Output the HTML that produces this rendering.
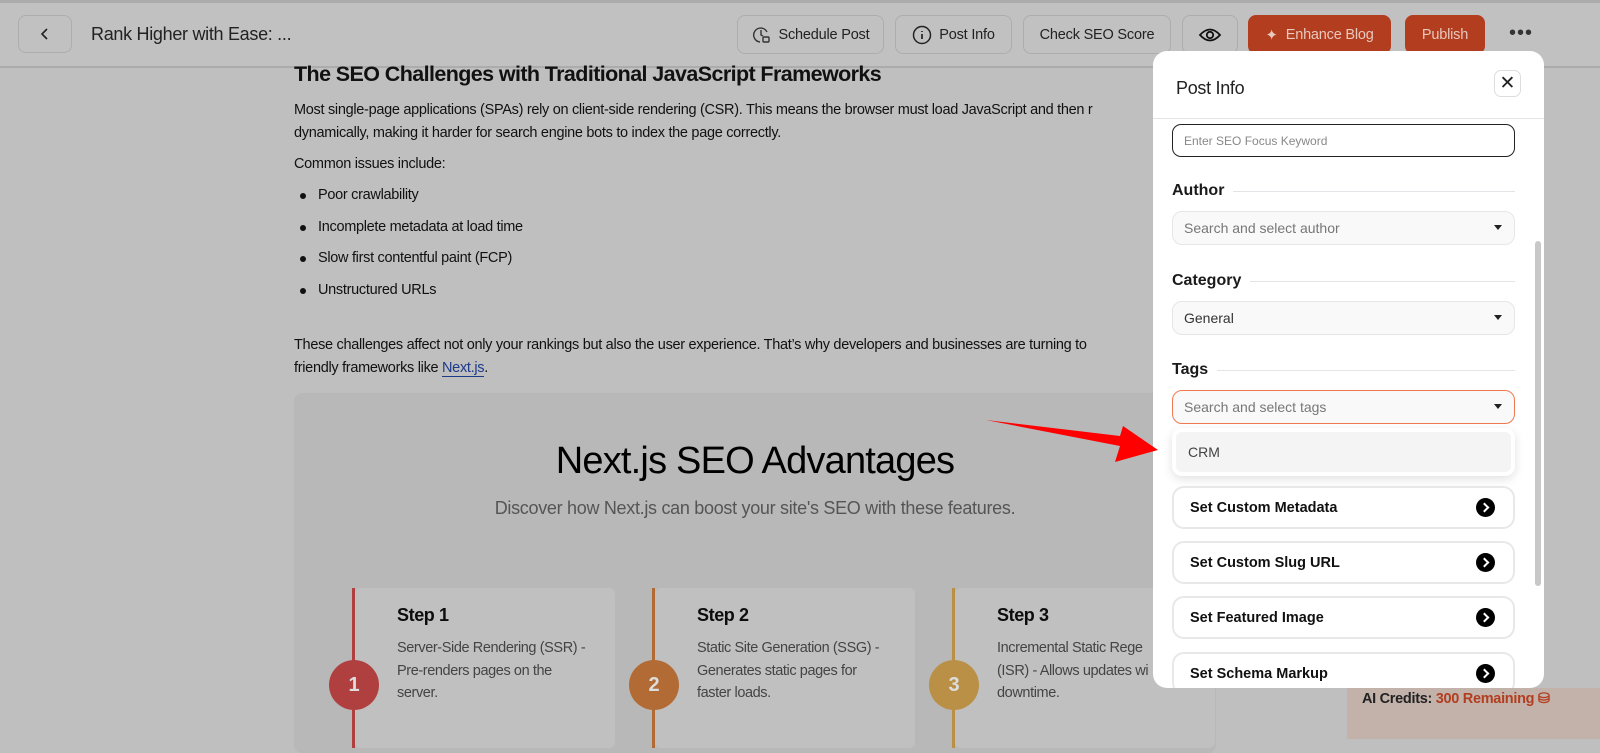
<!DOCTYPE html>
<html><head><meta charset="utf-8"><style>
*{box-sizing:border-box;margin:0;padding:0}
body{width:1600px;height:739px;overflow:hidden;background:#bfbfbf;font-family:"Liberation Sans",sans-serif;color:#0d0d0d;position:relative}
.hdr{position:absolute;left:0;top:0;width:1600px;height:68px;background:#c1c1c1;border-top:3px solid #acacac;border-bottom:2px solid #acacac}
.btn{position:absolute;top:15px;height:39px;border:1px solid #adadad;border-radius:8px;font-size:14.5px;display:flex;align-items:center;justify-content:center;color:#222;letter-spacing:-0.2px}
.or{background:#b23d1f;border-color:#b23d1f;color:#e8c8bf}
.c{position:absolute;font-size:14.5px;letter-spacing:-0.3px;color:#111}
ul.c{list-style:none}
ul.c li{height:31.5px;line-height:31.5px;position:relative;padding-left:24px}
ul.c li:before{content:"";position:absolute;left:6px;top:13px;width:6px;height:6px;border-radius:50%;background:#111}
.box{position:absolute;left:294px;top:393px;width:922px;height:360px;background:#b8b8b8;border-radius:8px}
.card{position:absolute;top:588px;width:260px;height:160px;background:#c0c0c0;border-radius:6px}
.line{position:absolute;top:588px;width:3px;height:160px}
.num{position:absolute;top:660px;width:50px;height:50px;border-radius:50%;color:#ddd;font-size:20px;font-weight:bold;display:flex;align-items:center;justify-content:center}
.st{position:absolute;top:605px;font-size:18px;font-weight:bold;letter-spacing:-0.4px}
.sd{position:absolute;top:637px;font-size:14.5px;line-height:22.5px;color:#444;letter-spacing:-0.4px;width:196px}
.modal{position:absolute;left:1153px;top:51px;width:391px;height:637px;background:#fff;border-radius:14px;overflow:hidden}
.lbl{position:absolute;left:19px;font-size:16px;font-weight:bold;color:#1a1a1a;display:flex;align-items:center;width:343px}
.lbl:after{content:"";flex:1;height:1px;background:#e4e4e8;margin-left:9px}
.sel{position:absolute;left:19px;width:343px;height:34px;border:1px solid #e6e6e6;background:#f9f9f9;border-radius:10px;font-size:14px;color:#777;padding-left:11px;display:flex;align-items:center}
.sel:after{content:"";position:absolute;right:12px;top:13px;border:4px solid transparent;border-top:5px solid #222}
.opt{position:absolute;left:19px;width:343px;height:43px;border:2px solid #e8e8e8;border-radius:12px;font-size:14.5px;font-weight:bold;padding-left:16px;display:flex;align-items:center;color:#111}
.opt i{position:absolute;right:18px;top:10px;width:19px;height:19px;border-radius:50%;background:#000}
.opt i:after{content:"";position:absolute;left:5px;top:6px;width:5px;height:5px;border-right:2px solid #fff;border-top:2px solid #fff;transform:rotate(45deg)}
</style></head><body>
<div class="hdr"></div>
<div class="btn" style="left:18px;width:54px;height:38px;top:15px"><svg width="14" height="14" viewBox="0 0 14 14"><path d="M9 2 4 7l5 5" fill="none" stroke="#222" stroke-width="1.6"/></svg></div>
<div class="c" style="left:91px;top:24px;font-size:18px;color:#222">Rank Higher with Ease: ...</div>
<div class="btn" style="left:737px;width:147px"><svg width="20" height="20" viewBox="0 0 20 20" style="margin-right:7px"><path d="M15 7A7 7 0 1 0 8 17" fill="none" stroke="#333" stroke-width="1.4"/><path d="M9 5v5l2 1" fill="none" stroke="#333" stroke-width="1.4"/><rect x="11" y="12" width="6" height="5" rx="1" fill="none" stroke="#333" stroke-width="1.4"/></svg>Schedule Post</div>
<div class="btn" style="left:895px;width:117px"><svg width="20" height="20" viewBox="0 0 20 20" style="margin-right:7px"><circle cx="10" cy="10" r="8.5" fill="none" stroke="#222" stroke-width="1.5"/><path d="M10 9v5M10 6v1" stroke="#222" stroke-width="1.7"/></svg>Post Info</div>
<div class="btn" style="left:1023px;width:148px">Check SEO Score</div>
<div class="btn" style="left:1182px;width:56px"><svg width="24" height="20" viewBox="0 0 24 20"><path d="M2 10Q12-1 22 10Q12 21 2 10Z" fill="none" stroke="#111" stroke-width="1.8"/><circle cx="12" cy="10" r="3.2" fill="none" stroke="#111" stroke-width="1.8"/></svg></div>
<div class="btn or" style="left:1248px;width:143px"><span style="margin-right:8px;font-size:15px">✦</span>Enhance Blog</div>
<div class="btn or" style="left:1405px;width:80px">Publish</div>
<div style="position:absolute;left:1509px;top:22px;font-size:20px;letter-spacing:1px;color:#333">•••</div>

<div class="c" style="left:294px;top:62px;font-size:21.5px;font-weight:bold;letter-spacing:-0.6px">The SEO Challenges with Traditional JavaScript Frameworks</div>
<div class="c" style="left:294px;top:99px;line-height:23px;width:900px;white-space:nowrap">Most single-page applications (SPAs) rely on client-side rendering (CSR). This means the browser must load JavaScript and then r<br>dynamically, making it harder for search engine bots to index the page correctly.</div>
<div class="c" style="left:294px;top:153px;line-height:23px">Common issues include:</div>
<ul class="c" style="left:294px;top:180px"><li>Poor crawlability</li><li>Incomplete metadata at load time</li><li>Slow first contentful paint (FCP)</li><li>Unstructured URLs</li></ul>
<div class="c" style="left:294px;top:334px;line-height:23px;width:900px;white-space:nowrap">These challenges affect not only your rankings but also the user experience. That’s why developers and businesses are turning to<br>friendly frameworks like <span style="color:#1e3a8a;border-bottom:1.5px solid #1e3a8a">Next.js</span>.</div>
<div class="box"></div>
<div class="c" style="left:294px;width:922px;text-align:center;top:440px;font-size:38px;letter-spacing:-0.8px;color:#000">Next.js SEO Advantages</div>
<div class="c" style="left:294px;width:922px;text-align:center;top:498px;font-size:18px;color:#555">Discover how Next.js can boost your site's SEO with these features.</div>
<div class="card" style="left:355px"></div><div class="card" style="left:655px"></div><div class="card" style="left:955px"></div>
<div class="line" style="left:352px;background:#b04040"></div><div class="line" style="left:652px;background:#b36b35"></div><div class="line" style="left:952px;background:#b99045"></div>
<div class="num" style="left:329px;background:#b04040">1</div><div class="num" style="left:629px;background:#b36b35">2</div><div class="num" style="left:929px;background:#b99045">3</div>
<div class="st" style="left:397px">Step 1</div><div class="st" style="left:697px">Step 2</div><div class="st" style="left:997px">Step 3</div>
<div class="sd" style="left:397px">Server-Side Rendering (SSR) - Pre-renders pages on the server.</div>
<div class="sd" style="left:697px">Static Site Generation (SSG) - Generates static pages for faster loads.</div>
<div class="sd" style="left:997px;white-space:nowrap">Incremental Static Rege<br>(ISR) - Allows updates wi<br>downtime.</div>

<div style="position:absolute;left:1347px;top:688px;width:253px;height:51px;background:#c3b2aa"></div>
<div class="c" style="left:1362px;top:691px;font-size:14.5px;font-weight:bold;color:#222">AI Credits: <span style="color:#b23d1f">300 Remaining ⛁</span></div>

<div class="modal">
<div style="position:absolute;left:23px;top:27px;font-size:18px;color:#222;letter-spacing:-0.3px">Post Info</div>
<div style="position:absolute;left:341px;top:19px;width:27px;height:27px;border:1px solid #ddd;border-radius:7px;font-size:19px;text-align:center;line-height:25px;color:#222">✕</div>
<div style="position:absolute;left:0;top:67px;width:391px;height:1px;background:#e4e4e4"></div>
<div style="position:absolute;left:19px;top:73px;width:343px;height:33px;border:1.5px solid #222;border-radius:9px;font-size:12px;color:#888;padding-left:11px;display:flex;align-items:center">Enter SEO Focus Keyword</div>
<div class="lbl" style="top:131px">Author</div>
<div class="sel" style="top:160px">Search and select author</div>
<div class="lbl" style="top:221px">Category</div>
<div class="sel" style="top:250px;color:#333">General</div>
<div class="lbl" style="top:310px">Tags</div>
<div class="sel" style="top:339px;border-color:#f07a50;border-width:1.5px">Search and select tags</div>
<div style="position:absolute;left:19px;top:377px;width:343px;height:48px;background:#fff;border-radius:10px;box-shadow:0 3px 10px rgba(0,0,0,.12)"><div style="position:absolute;left:4px;top:4px;right:4px;bottom:4px;background:#f4f4f4;border-radius:6px;font-size:14px;color:#444;padding-left:12px;display:flex;align-items:center">CRM</div></div>
<div class="opt" style="top:435px">Set Custom Metadata<i></i></div>
<div class="opt" style="top:490px">Set Custom Slug URL<i></i></div>
<div class="opt" style="top:545px">Set Featured Image<i></i></div>
<div class="opt" style="top:601px">Set Schema Markup<i></i></div>
<div style="position:absolute;left:382px;top:190px;width:6px;height:345px;background:#c8c8c8;border-radius:3px"></div>
</div>
<svg style="position:absolute;left:980px;top:410px" width="185" height="60" viewBox="0 0 185 60"><path d="M6 10 140 36 135 52 178 40 143 16 140 26Z" fill="#f00"/></svg>
</body></html>
